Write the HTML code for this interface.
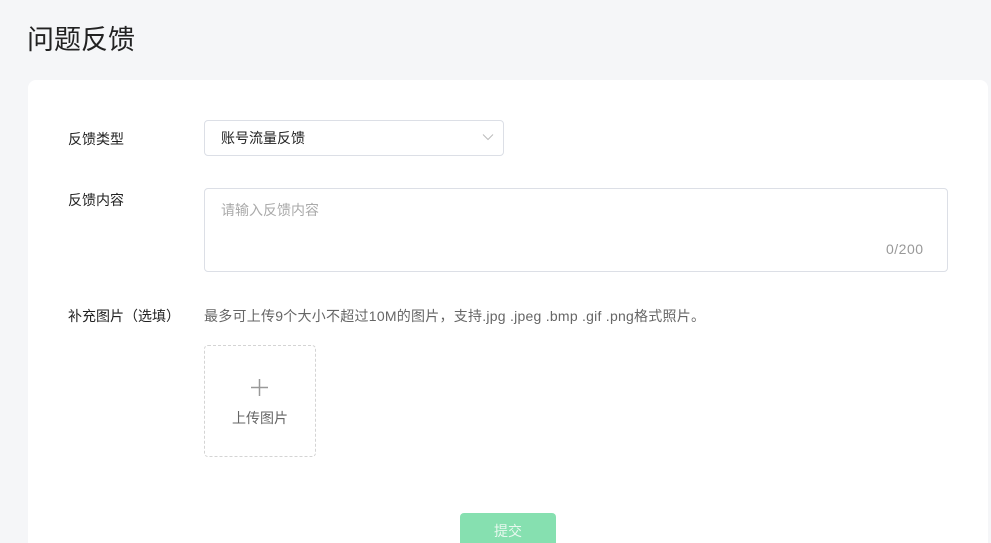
<!DOCTYPE html>
<html><head><meta charset="utf-8"><style>
*{margin:0;padding:0;box-sizing:border-box}
html,body{width:991px;height:543px;overflow:hidden}
body{background:#f5f6f8;font-family:"Liberation Sans","Noto Sans CJK SC",sans-serif;position:relative}
.t{position:absolute;left:27px;top:18px;font-size:27px;color:#222}
.card{position:absolute;left:28px;top:80px;width:960px;height:463px;background:#fff;border-radius:8px 8px 0 0}
.a{position:absolute}
.lab{font-size:14px;color:#222}
</style></head><body>
<div class="t">问题反馈</div>
<div class="card"></div>
<div class="a lab" style="left:68px;top:129px">反馈类型</div>
<div class="a" style="left:204px;top:120px;width:300px;height:36px;border:1px solid #dcdfe6;border-radius:4px"></div>
<div class="a" style="left:221px;top:128px;font-size:14px;color:#222">账号流量反馈</div>
<svg class="a" style="left:482px;top:133px" width="12" height="8"><path d="M1 1.5L6 6.5L11 1.5" fill="none" stroke="#bbb" stroke-width="1"/></svg>
<div class="a lab" style="left:68px;top:190px">反馈内容</div>
<div class="a" style="left:204px;top:188px;width:744px;height:84px;border:1px solid #dcdfe6;border-radius:4px"></div>
<div class="a" style="left:221px;top:200px;font-size:14px;color:#aaa">请输入反馈内容</div>
<div class="a" style="left:886px;top:241px;font-size:14px;color:#999;letter-spacing:0.5px">0/200</div>
<div class="a lab" style="left:68px;top:306px">补充图片（选填）</div>
<div class="a" style="left:204px;top:306px;font-size:14px;color:#666;letter-spacing:0.25px">最多可上传9个大小不超过10M的图片，支持.jpg .jpeg .bmp .gif .png格式照片。</div>
<div class="a" style="left:204px;top:345px;width:112px;height:112px;border:1px dashed #d4d4d4;border-radius:4px"></div>
<svg class="a" style="left:250px;top:378px" width="19" height="19"><path d="M9.5 1V18M1 9.5H18" stroke="#999" stroke-width="1.5"/></svg>
<div class="a" style="left:232px;top:408px;font-size:14px;color:#666">上传图片</div>
<div class="a" style="left:460px;top:513px;width:96px;height:40px;background:#86e0b0;border-radius:4px;color:#e8f8ef;font-size:14px;text-align:center;line-height:36px">提交</div>
</body></html>
